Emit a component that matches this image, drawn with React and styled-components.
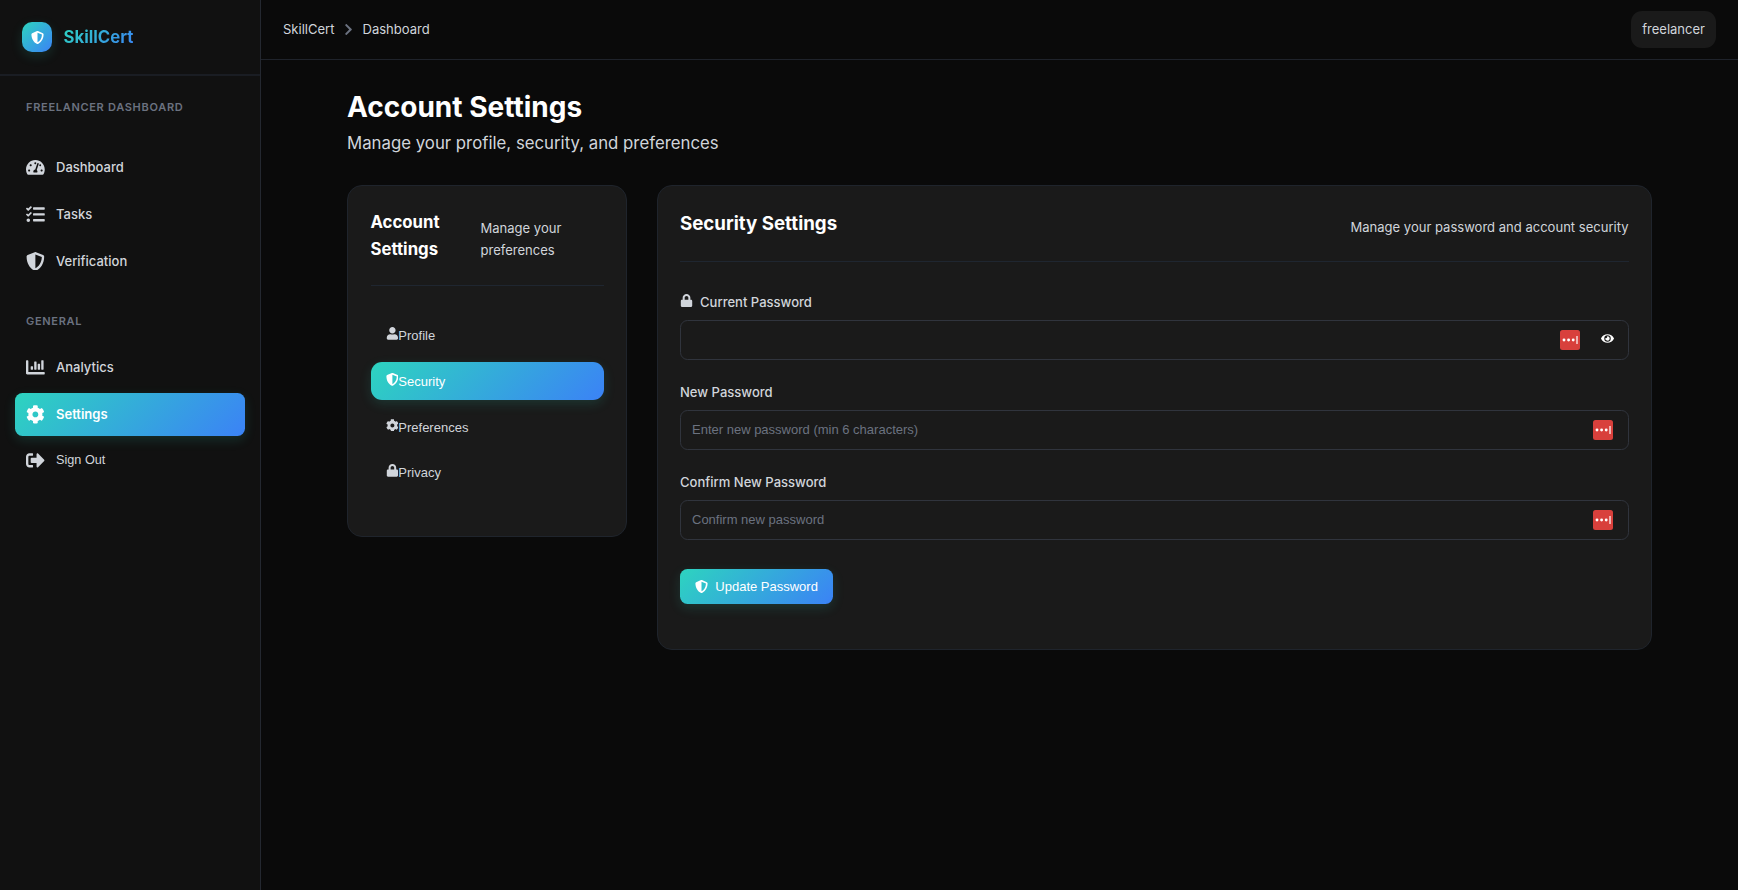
import React from 'react';
import styled, { createGlobalStyle, css } from 'styled-components';
import {
  FaTachometerAlt,
  FaTasks,
  FaShieldAlt,
  FaChartBar,
  FaCog,
  FaSignOutAlt,
  FaChevronRight,
  FaUser,
  FaLock,
  FaEye,
} from 'react-icons/fa';

const gradient = 'linear-gradient(135deg, #2dd4bf 0%, #3b82f6 100%)';
const sans = '"Liberation Sans", Arial, sans-serif';

const GlobalStyle = createGlobalStyle`
  *, *::before, *::after { box-sizing: border-box; }
  body {
    margin: 0;
    background: #0a0a0a;
    color: #d1d5db;
    font-family: Inter, sans-serif;
    font-size: 13.04px;
    line-height: 21px;
  }
  h1, h2, h3, p { margin: 0; }
  button, input { font-family: ${sans}; font-size: 13px; }
`;

const Layout = styled.div`
  display: flex;
  min-height: 100vh;
`;

const Sidebar = styled.aside`
  width: 261px;
  flex-shrink: 0;
  background: #111111;
  border-right: 1px solid #242830;
`;

const Brand = styled.div`
  display: flex;
  align-items: center;
  gap: 11.5px;
  height: 76px;
  padding: 0 22px;
  border-bottom: 2px solid #1a1d23;
`;

const BrandMark = styled.div`
  display: flex;
  align-items: center;
  justify-content: center;
  width: 30px;
  height: 30px;
  border-radius: 10px;
  background: ${gradient};
  box-shadow: 0 4px 12px rgba(45, 212, 191, 0.15);
  color: #fff;
  font-size: 13px;
`;

const BrandName = styled.span`
  font-size: 16.75px;
  line-height: 27px;
  font-weight: 700;
  background: ${gradient};
  background-clip: text;
  -webkit-background-clip: text;
  color: transparent;
`;

const NavSection = styled.nav`
  padding: ${(p) => (p.$first ? '22px' : '29.2px')} 15px 0;
`;

const NavHeading = styled.h3`
  margin-bottom: ${(p) => (p.$first ? '29.5px' : '16.5px')};
  padding: 0 11px;
  font-size: 11px;
  line-height: 18px;
  font-weight: 600;
  letter-spacing: 0.7px;
  color: #6b7280;
`;

const NavList = styled.div`
  display: flex;
  flex-direction: column;
  gap: 4px;
`;

const activeFill = css`
  background: ${gradient};
  color: #fff;
  box-shadow: 0 4px 12px rgba(45, 212, 191, 0.15);
`;

const NavItem = styled.a`
  display: flex;
  align-items: center;
  gap: 11.25px;
  height: 43px;
  padding: 0 11px;
  border-radius: 7.5px;
  font-size: 13px;
  font-weight: ${(p) => (p.$active ? 600 : 500)};
  color: #d1d5db;
  ${(p) => p.$active && activeFill}

  svg { font-size: 18.75px; }
`;

const SignOutButton = styled.button`
  display: flex;
  align-items: center;
  gap: 11.25px;
  height: 40.5px;
  padding: 0 11px;
  border: 0;
  background: none;
  color: #d1d5db;
  font-size: 12.7px;

  svg { font-size: 18.75px; }
`;

const Main = styled.main`
  flex: 1;
  min-width: 0;
`;

const TopBar = styled.header`
  display: flex;
  align-items: center;
  justify-content: space-between;
  height: 60px;
  padding: 0 22px;
  border-bottom: 1px solid #1f232b;
`;

const Breadcrumb = styled.div`
  display: flex;
  align-items: center;
  gap: 7.5px;

  svg { font-size: 13px; color: #6b7280; }
`;

const UserChip = styled.div`
  height: 37px;
  padding: 8px 11px;
  border-radius: 11px;
  background: #1a1a1a;
`;

const Content = styled.div`
  width: 1305px;
  margin: 0 auto;
  padding-top: 30px;
`;

const PageTitle = styled.h1`
  font-size: 28px;
  line-height: 34px;
  font-weight: 700;
  color: #fff;
`;

const PageSubtitle = styled.p`
  margin: 6px 0 28px;
  font-size: 16.8px;
  line-height: 27px;
`;

const Columns = styled.div`
  display: grid;
  grid-template-columns: 280px 1fr;
  gap: 30px;
  align-items: start;
`;

const Card = styled.section`
  padding: 22.5px 22.5px 45px ${(p) => (p.$wide ? '22px' : '22.5px')};
  border: 1px solid #1f242c;
  border-radius: 15px;
  background: #1a1a1a;
`;

const CardHeader = styled.div`
  display: flex;
  align-items: center;
  justify-content: space-between;
  padding-bottom: 22.5px;
  margin-bottom: 30px;
  border-bottom: 1px solid #1f2630;
`;

const CardTitle = styled.h2`
  width: ${(p) => (p.$narrow ? '90px' : 'auto')};
  font-size: ${(p) => (p.$narrow ? '16.75px' : '18.7px')};
  line-height: ${(p) => (p.$narrow ? '27px' : '30px')};
  font-weight: 700;
  color: #fff;
`;

const CardNote = styled.p`
  width: ${(p) => (p.$narrow ? '123px' : 'auto')};
  margin-top: 8px;
  line-height: 21.5px;
`;

const Menu = styled.div`
  display: flex;
  flex-direction: column;
  gap: 7.5px;
`;

const MenuItem = styled.button`
  height: 38.2px;
  padding: 0 15px;
  border: 0;
  border-radius: 11px;
  background: none;
  color: #d1d5db;
  text-align: left;
  ${(p) => p.$active && activeFill}

  svg { font-size: 12.8px; }
`;

const Field = styled.div`
  margin-bottom: ${(p) => (p.$last ? '29px' : '22.5px')};
`;

const Label = styled.label`
  display: block;
  margin-bottom: 7px;
  font-weight: 500;

  svg { margin-right: 7px; }
`;

const InputBox = styled.div`
  display: flex;
  align-items: center;
  gap: 21px;
  height: 39.6px;
  padding: 0 ${(p) => (p.$reveal ? '14px' : '15px')} 0 11px;
  border: 1px solid #30343d;
  border-radius: 7.5px;
`;

const Input = styled.input`
  flex: 1;
  padding: 0;
  border: 0;
  outline: 0;
  background: none;
  color: #fff;

  &::placeholder { color: #6b7280; }
`;

const RevealButton = styled.button`
  display: flex;
  padding: 0 0 2px;
  border: 0;
  background: none;
  color: #fff;
`;

const SubmitButton = styled.button`
  display: flex;
  align-items: center;
  gap: 7.3px;
  height: 35.5px;
  padding: 0 15px;
  border: 0;
  border-radius: 7.5px;
  ${activeFill}
`;

const VaultIcon = () => (
  <svg width="20" height="20" viewBox="0 0 20 20">
    <rect width="20" height="20" rx="2.5" fill="#d8403c" />
    <circle cx="4" cy="10" r="1.45" fill="#fff" />
    <circle cx="8.6" cy="10" r="1.45" fill="#fff" />
    <circle cx="13.2" cy="10" r="1.45" fill="#fff" />
    <rect x="16.4" y="6" width="1.2" height="8" rx="0.5" fill="#fff" />
  </svg>
);

const PasswordField = ({ label, icon, placeholder, reveal, last }) => (
  <Field $last={last}>
    <Label>
      {icon}
      {label}
    </Label>
    <InputBox $reveal={reveal}>
      <Input type="password" placeholder={placeholder} />
      <VaultIcon />
      {reveal && (
        <RevealButton type="button">
          <FaEye />
        </RevealButton>
      )}
    </InputBox>
  </Field>
);

export default function App() {
  return (
    <Layout>
      <GlobalStyle />
      <Sidebar>
        <Brand>
          <BrandMark><FaShieldAlt /></BrandMark>
          <BrandName>SkillCert</BrandName>
        </Brand>
        <NavSection $first>
          <NavHeading $first>FREELANCER DASHBOARD</NavHeading>
          <NavList>
            <NavItem><FaTachometerAlt />Dashboard</NavItem>
            <NavItem><FaTasks />Tasks</NavItem>
            <NavItem><FaShieldAlt />Verification</NavItem>
          </NavList>
        </NavSection>
        <NavSection>
          <NavHeading>GENERAL</NavHeading>
          <NavList>
            <NavItem><FaChartBar />Analytics</NavItem>
            <NavItem $active><FaCog />Settings</NavItem>
            <SignOutButton><FaSignOutAlt />Sign Out</SignOutButton>
          </NavList>
        </NavSection>
      </Sidebar>
      <Main>
        <TopBar>
          <Breadcrumb>
            <span>SkillCert</span>
            <FaChevronRight />
            <span>Dashboard</span>
          </Breadcrumb>
          <UserChip>freelancer</UserChip>
        </TopBar>
        <Content>
          <PageTitle>Account Settings</PageTitle>
          <PageSubtitle>Manage your profile, security, and preferences</PageSubtitle>
          <Columns>
            <Card>
              <CardHeader>
                <CardTitle $narrow>Account Settings</CardTitle>
                <CardNote $narrow>Manage your preferences</CardNote>
              </CardHeader>
              <Menu>
                <MenuItem><FaUser />Profile</MenuItem>
                <MenuItem $active><FaShieldAlt />Security</MenuItem>
                <MenuItem><FaCog />Preferences</MenuItem>
                <MenuItem><FaLock />Privacy</MenuItem>
              </Menu>
            </Card>
            <Card $wide>
              <CardHeader>
                <CardTitle>Security Settings</CardTitle>
                <CardNote>Manage your password and account security</CardNote>
              </CardHeader>
              <PasswordField label="Current Password" icon={<FaLock />} reveal />
              <PasswordField label="New Password" placeholder="Enter new password (min 6 characters)" />
              <PasswordField label="Confirm New Password" placeholder="Confirm new password" last />
              <SubmitButton type="button"><FaShieldAlt />Update Password</SubmitButton>
            </Card>
          </Columns>
        </Content>
      </Main>
    </Layout>
  );
}
